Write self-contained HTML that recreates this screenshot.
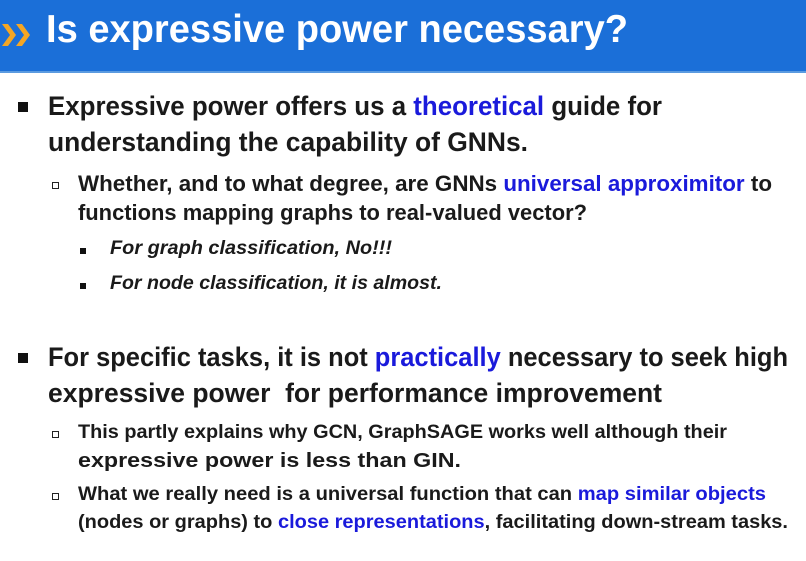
<!DOCTYPE html>
<html><head><meta charset="utf-8"><style>
body{margin:0;width:806px;height:561px;background:#fff;position:relative;overflow:hidden;font-family:"Liberation Sans",sans-serif;}
.hdr{position:absolute;left:0;top:0;width:806px;height:71px;background:#1b6fd8;border-bottom:2px solid #5b9be0;}
.l{position:absolute;white-space:nowrap;font-weight:bold;color:#1a1a1a;transform-origin:0 50%;line-height:1;}
.b{color:#1a1adb}
.sq{position:absolute;background:#111}
.hs{position:absolute;width:7px;height:7px;border:1.5px solid #222;box-sizing:border-box}
</style></head><body>
<div class="hdr"></div>
<svg style="position:absolute;left:0;top:20px" width="40" height="30"><path d="M2 4 L10 15 L2 26 L8 26 L16 15 L8 4Z M16 4 L24 15 L16 26 L22 26 L30 15 L22 4Z" fill="#f5a623"/></svg>
<div class="l" style="left:46px;top:10px;font-size:39px;color:#fff;--w:582" >Is expressive power necessary?</div>

<div class="sq" style="left:18px;top:102px;width:10px;height:10px"></div>
<div class="l" style="left:48px;top:93px;font-size:27px;--w:614">Expressive power offers us a <span class="b">theoretical</span> guide for</div>
<div class="l" style="left:48px;top:129px;font-size:27px;--w:480">understanding the capability of GNNs.</div>

<div class="hs" style="left:52px;top:182px"></div>
<div class="l" style="left:78px;top:173px;font-size:22px;--w:694">Whether, and to what degree, are GNNs <span class="b">universal approximitor</span> to</div>
<div class="l" style="left:78px;top:202px;font-size:22px;--w:509">functions mapping graphs to real-valued vector?</div>

<div class="sq" style="left:80px;top:248px;width:6px;height:6px"></div>
<div class="l" style="left:110px;top:239px;font-size:19px;font-style:italic;--w:282">For graph classification, No!!!</div>
<div class="sq" style="left:80px;top:283px;width:6px;height:6px"></div>
<div class="l" style="left:110px;top:274px;font-size:19px;font-style:italic;--w:332">For node classification, it is almost.</div>

<div class="sq" style="left:18px;top:353px;width:10px;height:10px"></div>
<div class="l" style="left:48px;top:344px;font-size:27px;--w:740">For specific tasks, it is not <span class="b">practically</span> necessary to seek high</div>
<div class="l" style="left:48px;top:380px;font-size:27px;--w:614">expressive power&nbsp; for performance improvement</div>

<div class="hs" style="left:52px;top:431px"></div>
<div class="l" style="left:78px;top:423px;font-size:19px;--w:649">This partly explains why GCN, GraphSAGE works well although their</div>
<div class="l" style="left:78px;top:451px;font-size:20px;--w:383">expressive power is less than GIN.</div>
<div class="hs" style="left:52px;top:493px"></div>
<div class="l" style="left:78px;top:485px;font-size:19px;--w:688">What we really need is a universal function that can <span class="b">map similar objects</span></div>
<div class="l" style="left:78px;top:513px;font-size:19px;--w:710">(nodes or graphs) to <span class="b">close representations</span>, facilitating down-stream tasks.</div>
<script>
document.querySelectorAll('.l').forEach(function(e){var w=parseFloat(getComputedStyle(e).getPropertyValue('--w'));if(w){e.style.transform='scaleX('+(w/e.getBoundingClientRect().width)+')';}});
</script>
</body></html>
